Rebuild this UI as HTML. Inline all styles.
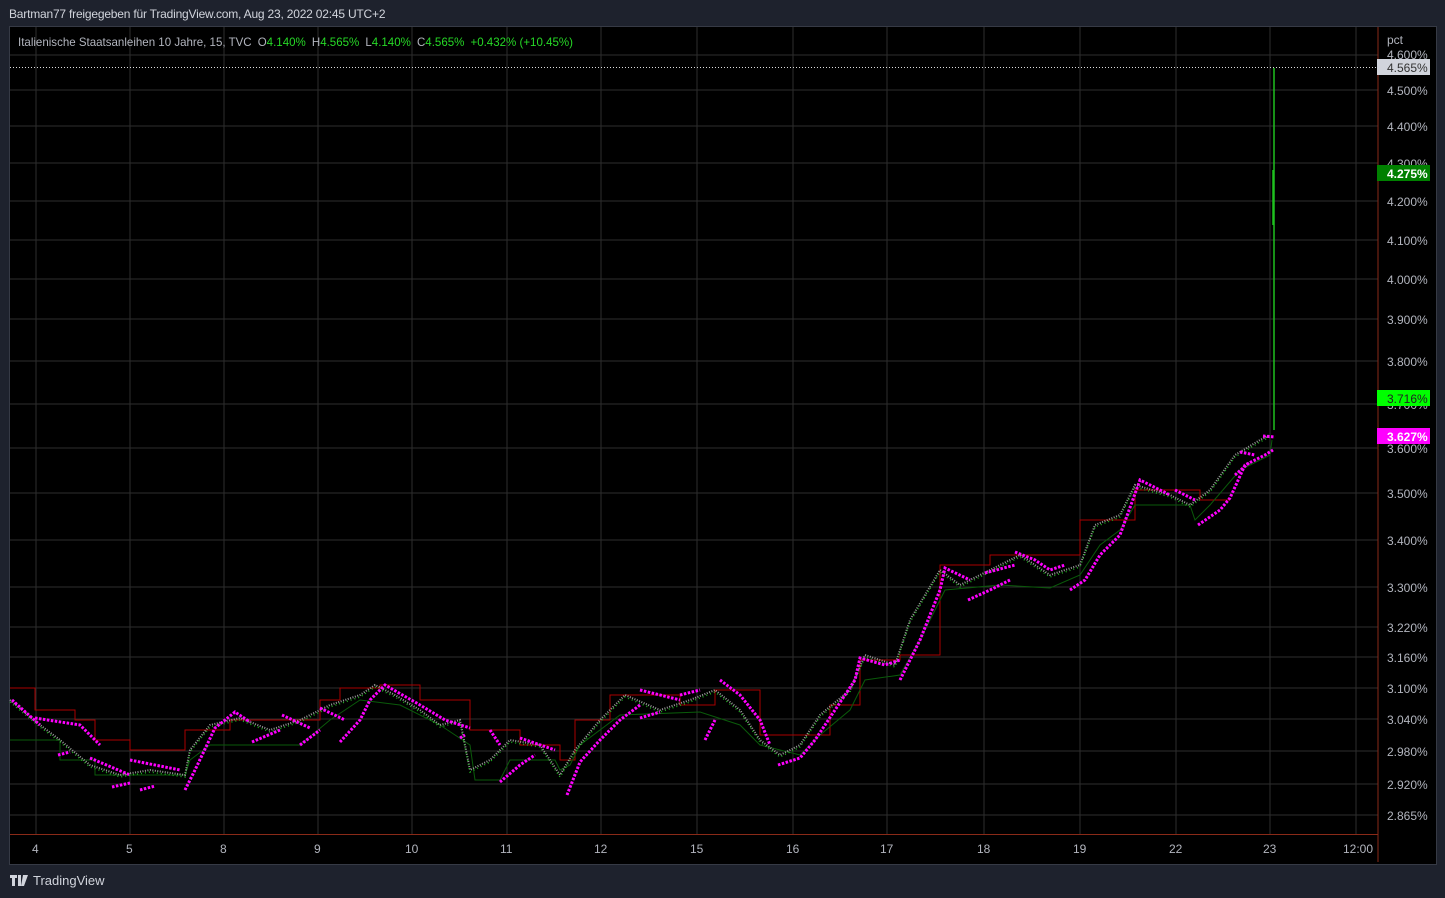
<!DOCTYPE html>
<html><head><meta charset="utf-8"><style>
body{margin:0;width:1445px;height:898px;background:#1e222d;overflow:hidden;font-family:"Liberation Sans",sans-serif;}
.t{position:absolute;white-space:nowrap}
</style></head><body>
<div class="t" style="left:9px;top:7px;font-size:12px;color:#d1d4dc;letter-spacing:-0.2px">Bartman77 freigegeben für TradingView.com, Aug 23, 2022 02:45 UTC+2</div>
<div style="position:absolute;left:9px;top:26px;width:1426px;height:837px;background:#000;border:1px solid #363a45"></div>
<svg style="position:absolute;left:0;top:0" width="1445" height="898">
<g stroke="#2e2e2e" stroke-width="1">
<path d="M36 27V834M130 27V834M224 27V834M318 27V834M412 27V834M507 27V834M601 27V834M697 27V834M793 27V834M887 27V834M984 27V834M1080 27V834M1176 27V834M1270 27V834M1356 27V834"/>
<path d="M10 55H1378M10 90H1378M10 126H1378M10 163H1378M10 201H1378M10 240H1378M10 279H1378M10 319H1378M10 361H1378M10 404H1378M10 448H1378M10 493H1378M10 540H1378M10 587H1378M10 627H1378M10 657H1378M10 688H1378M10 719H1378M10 751H1378M10 784H1378M10 815H1378"/>
</g>
<path d="M1378 27V862M10 834.5H1378" stroke="#8a2a18" stroke-width="1"/>
<path d="M10 67.5H1378" stroke="#ddd" stroke-dasharray="1 2"/>
<polyline fill="none" stroke="#a00" stroke-width="1" points="10,688 35,688 35,710 75,710 75,720 95,720 95,740 130,740 130,750 185,750 185,730 230,730 230,720 320,720 320,700 340,700 340,688 380,688 380,685 420,685 420,700 470,700 470,730 520,730 520,745 560,745 560,760 575,760 575,720 610,720 610,695 680,695 680,705 715,705 715,690 760,690 760,735 830,735 830,705 860,705 860,660 900,660 900,655 940,655 940,565 990,565 990,555 1080,555 1080,520 1135,520 1135,490 1200,490 1200,500 1230,500"/>
<polyline fill="none" stroke="#0a5a0a" stroke-width="1" points="10,740 60,740 60,760 95,760 95,775 185,775 190,760 210,745 300,745 330,720 360,700 400,705 440,725 470,745 475,780 500,780 510,760 555,760 560,770 570,765 580,745 620,715 700,712 740,725 760,745 800,755 820,735 850,710 865,680 900,675 920,640 945,590 1000,585 1050,588 1080,575 1100,545 1120,530 1135,505 1190,505 1195,520 1210,505 1240,470 1260,460 1270,455 1272,440"/>
<polyline fill="none" stroke="#999" stroke-width="2" stroke-dasharray="1 1.5" points="10,700 40,725 60,740 90,765 120,775 150,770 185,775 190,750 210,725 240,718 270,730 300,720 330,705 360,695 375,685 395,695 420,710 440,725 460,720 470,770 490,760 510,740 540,745 560,775 575,750 600,720 625,695 660,710 690,700 715,690 740,710 760,740 780,755 800,745 820,715 850,690 865,655 895,665 910,620 940,570 960,585 990,570 1020,555 1050,575 1080,565 1095,525 1120,515 1135,485 1170,495 1190,505 1210,490 1235,455 1260,440 1270,435"/>
<polyline fill="none" stroke="#1fb01f" stroke-width="1.5" stroke-dasharray="1 3" points="10,702 40,727 60,742 90,767 120,777 150,772 185,777 190,752 210,727 240,720 270,732 300,722 330,707 360,697 375,687 395,697 420,712 440,727 460,722 470,772 490,762 510,742 540,747 560,777 575,752 600,722 625,697 660,712 690,702 715,692 740,712 760,742 780,757 800,747 820,717 850,692 865,657 895,667 910,622 940,572 960,587 990,572 1020,557 1050,577 1080,567 1095,527 1120,517 1135,487 1170,497 1190,507 1210,492 1235,457 1260,442 1270,437"/>
<path d="M1274 68V430M1273 170V225" stroke="#1fc01f" stroke-width="1.5"/>
<g fill="none" stroke="#ff00ff" stroke-width="3" stroke-dasharray="2.5 1.5">
<path d="M12 700L40 725M35 718L80 725L100 745M58 755L70 752M90 758L130 775M112 787L130 783M130 760L180 770M140 790L155 786M185 790L195 770L215 728L235 712L250 722M252 742L280 730M282 715L310 728M300 745L320 730M320 708L345 720M340 742L360 720L370 700L385 685L420 705L445 720L470 728M460 738L465 735M490 730L500 745M500 782L520 765L535 755M520 738L555 750M567 795L580 762L600 740L620 720L640 705M640 690L680 700M640 718L660 712M680 695L700 690M705 740L715 720M720 680L740 695L760 720L770 745M778 765L800 758L815 740L835 710L855 680L860 658L885 665L900 660M900 680L920 640L940 590L945 568L970 580M968 600L990 590L1010 580M985 573L1015 565M1015 552L1035 560L1050 570L1065 565M1070 590L1085 580L1100 555L1120 535L1140 480L1170 495M1175 490L1195 500M1198 525L1220 510L1230 498L1245 465L1265 455L1273 450M1235 475L1250 462M1240 452L1255 455M1263 436L1275 437"/>
</g>
<g fill="#b2b5be" font-size="12" font-family="Liberation Sans,sans-serif">
<text x="32" y="853">4</text><text x="126" y="853">5</text><text x="220" y="853">8</text><text x="314" y="853">9</text><text x="405" y="853">10</text><text x="500" y="853">11</text><text x="594" y="853">12</text><text x="690" y="853">15</text><text x="786" y="853">16</text><text x="880" y="853">17</text><text x="977" y="853">18</text><text x="1073" y="853">19</text><text x="1169" y="853">22</text><text x="1263" y="853">23</text><text x="1343" y="853">12:00</text>
<text x="1387" y="44">pct</text>
<text x="1387" y="59">4.600%</text><text x="1387" y="95">4.500%</text><text x="1387" y="131">4.400%</text><text x="1387" y="168">4.300%</text><text x="1387" y="206">4.200%</text><text x="1387" y="245">4.100%</text><text x="1387" y="284">4.000%</text><text x="1387" y="324">3.900%</text><text x="1387" y="366">3.800%</text><text x="1387" y="409">3.700%</text><text x="1387" y="453">3.600%</text><text x="1387" y="498">3.500%</text><text x="1387" y="545">3.400%</text><text x="1387" y="592">3.300%</text><text x="1387" y="632">3.220%</text><text x="1387" y="662">3.160%</text><text x="1387" y="693">3.100%</text><text x="1387" y="724">3.040%</text><text x="1387" y="756">2.980%</text><text x="1387" y="789">2.920%</text><text x="1387" y="820">2.865%</text>
</g>
<rect x="1377" y="59" width="53" height="16" fill="#d1d4dc"/><text x="1387" y="72" font-size="12" fill="#333">4.565%</text>
<rect x="1377" y="165" width="53" height="16" fill="#008000"/><text x="1387" y="178" font-size="12" font-weight="bold" fill="#fff">4.275%</text>
<rect x="1377" y="390" width="53" height="16" fill="#00ff00"/><text x="1387" y="403" font-size="12" fill="#222">3.716%</text>
<rect x="1377" y="428" width="53" height="16" fill="#ff00ff"/><text x="1387" y="441" font-size="12" font-weight="bold" fill="#fff">3.627%</text>
<text x="18" y="46" font-size="12" fill="#b2b5be" textLength="555" lengthAdjust="spacingAndGlyphs">Italienische Staatsanleihen 10 Jahre, 15, TVC <tspan dx="3">O</tspan><tspan fill="#26d826">4.140%</tspan> <tspan dx="3">H</tspan><tspan fill="#26d826">4.565%</tspan> <tspan dx="3">L</tspan><tspan fill="#26d826">4.140%</tspan> <tspan dx="3">C</tspan><tspan fill="#26d826">4.565%</tspan> <tspan dx="3" fill="#26d826">+0.432% (+10.45%)</tspan></text>
<path d="M10 875h7v3h-2v8h-3v-8h-2zM18 875h3v11h-3zM23 875h5l-4 11h-3z" fill="#d1d4dc"/>
<text x="33" y="885" font-size="13" fill="#d1d4dc">TradingView</text>
</svg>
</body></html>
